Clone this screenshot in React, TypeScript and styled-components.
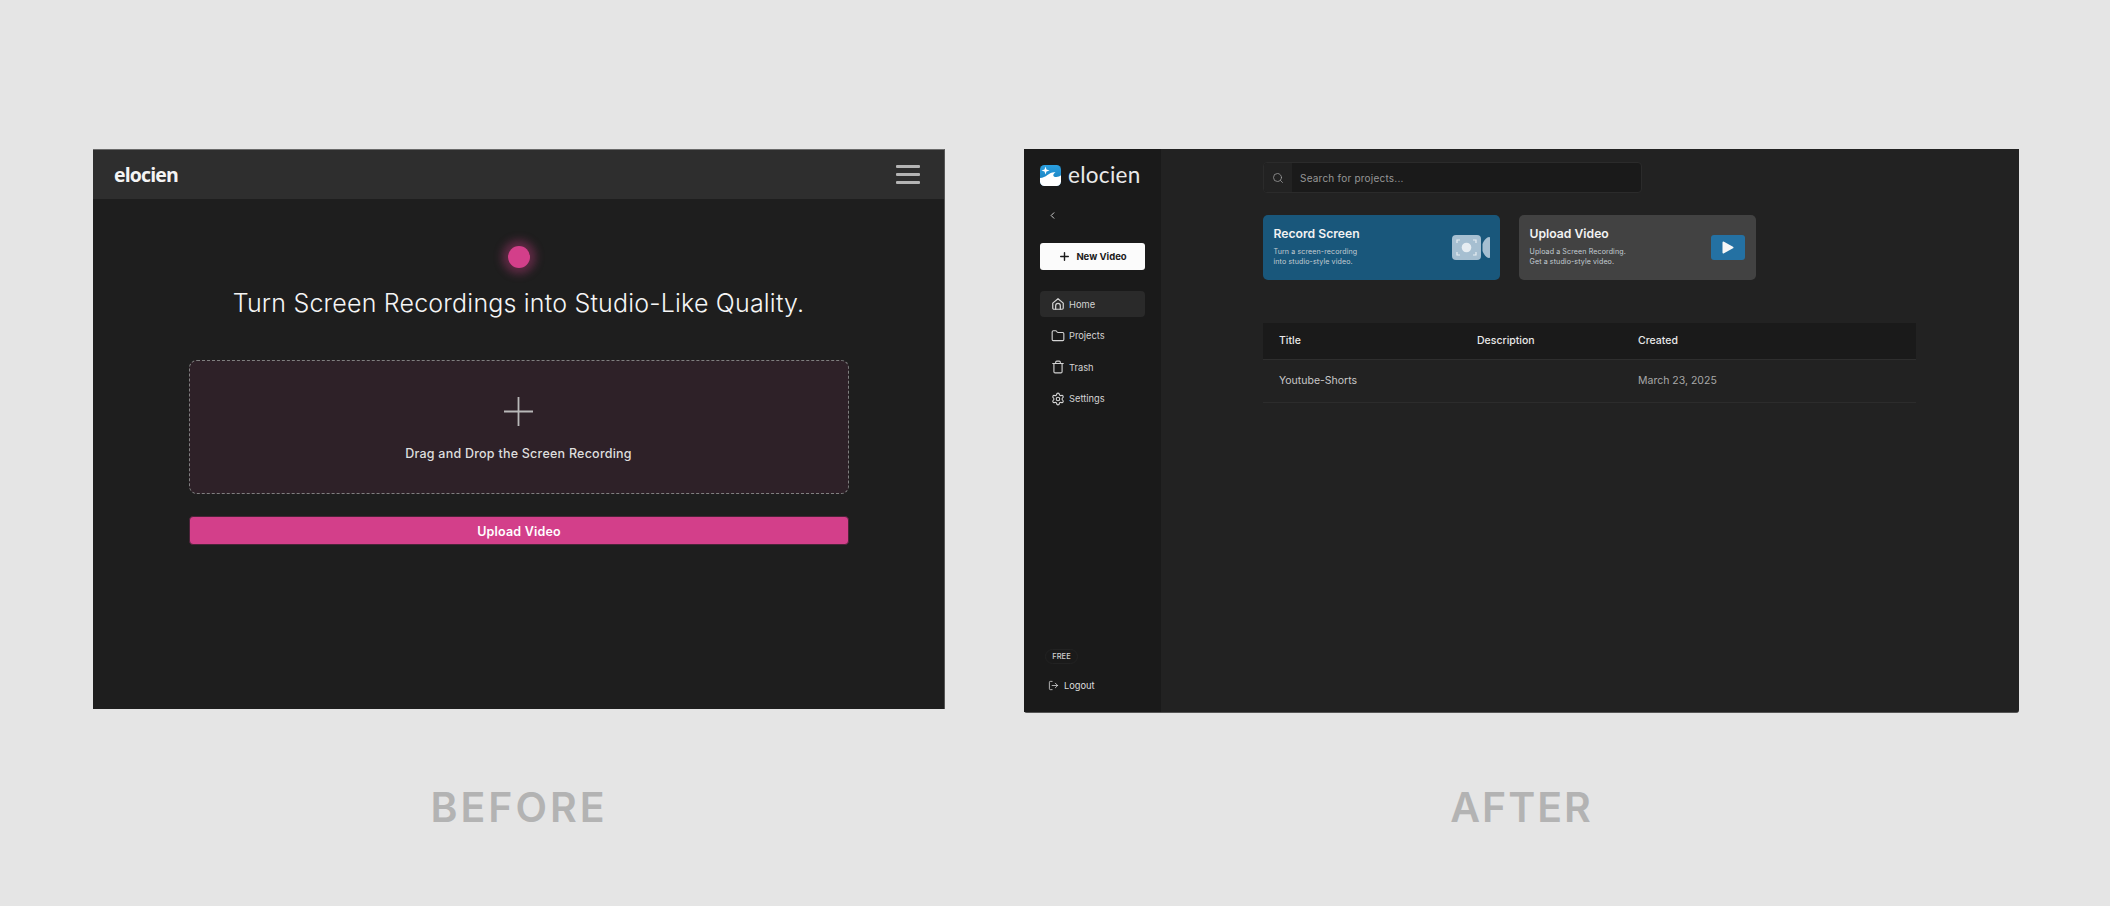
import styled, { createGlobalStyle } from "styled-components";
import { ChevronLeft, Folder, LogOut, Plus, Search, Settings, Trash } from "lucide-react";

const GlobalStyle = createGlobalStyle`
  * { box-sizing: border-box; }
  html, body { margin: 0; padding: 0; background: #e5e5e5; }
  body { font-family: "Inter", "Liberation Sans", sans-serif; overflow: hidden; }
`

const Stage = styled.div`
  display: flex;
  gap: 79px;
  align-items: flex-start;
  width: 2110px;
  height: 906px;
  padding: 149px 0 0 93px;
  background: #e5e5e5;
`

const Column = styled.section<{ $width: number }>`
  display: flex;
  flex-direction: column;
  justify-content: space-between;
  align-items: center;
  width: ${p => p.$width}px;
  height: 683px;
`

const Caption = styled.div<{ $tracking: number }>`
  font-family: "Inter", sans-serif;
  font-size: 41px;
  font-weight: 600;
  line-height: 50px;
  letter-spacing: ${p => p.$tracking}px;
  color: #b3b3b3;
`

/* before */
const BeforePanel = styled.div`
  width: 100%;
  height: 560px;
  background: #1e1e1e;
  border-top: 1px solid #6a6a6a;
  border-right: 1px solid #555;
`

const TopBar = styled.header`
  display: flex;
  align-items: center;
  justify-content: space-between;
  height: 49px;
  padding: 0 24px 0 21px;
  background: #2e2e2e;
`

const Brand = styled.div`
  font-family: "Open Sans", sans-serif;
  font-size: 19.5px;
  font-weight: 700;
  letter-spacing: -0.85px;
  color: #f4f4f4;
`

const Burger = styled.div`
  display: flex;
  flex-direction: column;
  gap: 5px;
  width: 24px;
`

const BurgerLine = styled.span`
  height: 3px;
  border-radius: 1px;
  background: #b4b4b4;
`

const BeforeBody = styled.main`
  display: flex;
  flex-direction: column;
  align-items: center;
  padding-top: 47px;
`

const RecordDot = styled.div`
  width: 22px;
  height: 22px;
  border-radius: 50%;
  background: #d33f8a;
  box-shadow: 0 0 9px 6px rgba(211, 63, 138, 0.35);
`

const Headline = styled.h1`
  margin: 20px 0 0;
  font-family: "Inter", sans-serif;
  font-size: 25px;
  font-weight: 300;
  line-height: 30px;
  letter-spacing: 0.19px;
  color: #f5f5f5;
`

const DropZone = styled.div`
  display: flex;
  flex-direction: column;
  align-items: center;
  gap: 20px;
  width: 660px;
  height: 134px;
  margin-top: 42px;
  padding-top: 36px;
  background: #2e2128;
  border: 1px dashed #7f7f7f;
  border-radius: 8px;
`

const DropLabel = styled.div`
  font-size: 12.5px;
  font-weight: 500;
  line-height: 16px;
  letter-spacing: 0.24px;
  color: #dedede;
`

const UploadButton = styled.button`
  width: 660px;
  height: 29px;
  margin-top: 22px;
  padding: 0 0 0 1px;
  font-family: "Inter", sans-serif;
  font-size: 12.5px;
  font-weight: 600;
  letter-spacing: 0.2px;
  line-height: 29px;
  color: #fff;
  background: #d33f8a;
  border: 1px solid #4c2339;
  border-radius: 4px;
`

/* after */
const AfterPanel = styled.div`
  display: flex;
  width: 100%;
  height: 564px;
  background: #222;
  border-radius: 0 0 3px 3px;
  border-bottom: 1px solid #555;
`

const Sidebar = styled.aside`
  display: flex;
  flex-direction: column;
  width: 137px;
  padding: 16px 16px 0;
  background: #1a1a1a;
`

const LogoRow = styled.div`
  display: flex;
  align-items: center;
  gap: 7px;
  height: 21px;
`

const LogoText = styled.span`
  padding-bottom: 2px;
  font-family: "Lato", sans-serif;
  font-size: 22.5px;
  font-weight: 400;
  letter-spacing: 0.3px;
  color: #e9e9e9;
`

const Collapse = styled.div`
  display: flex;
  align-items: center;
  height: 12px;
  margin-top: 23px;
  padding-left: 7px;
  color: #ddd;
`

const NewVideoButton = styled.button`
  display: flex;
  align-items: center;
  justify-content: center;
  gap: 5px;
  width: 105px;
  height: 27px;
  margin-top: 22px;
  padding: 0;
  font-family: "Inter", sans-serif;
  font-size: 9.5px;
  font-weight: 700;
  color: #1a1a1a;
  background: #fbfbfb;
  border: none;
  border-radius: 3px;
`

const Nav = styled.nav`
  display: flex;
  flex-direction: column;
  gap: 5.5px;
  margin-top: 21px;
`

const NavItem = styled.div<{ $active?: boolean }>`
  display: flex;
  align-items: center;
  gap: 4.5px;
  height: 26px;
  padding-left: 10.5px;
  font-size: 9.3px;
  color: #d4d4d4;
  background: ${p => (p.$active ? "#2a2a2a" : "transparent")};
  border-radius: 4px;
`

const SideFooter = styled.div`
  display: flex;
  flex-direction: column;
  align-items: flex-start;
  gap: 16px;
  margin-top: auto;
  padding: 0 0 21px 5px;
`

const PlanBadge = styled.div`
  display: flex;
  align-items: center;
  justify-content: center;
  width: 33px;
  height: 15px;
  font-size: 7.5px;
  font-weight: 500;
  color: #cfcfcf;
  border: 1px solid #222;
  border-radius: 8px;
`

const LogoutRow = styled.div`
  display: flex;
  align-items: center;
  gap: 5px;
  padding-left: 3px;
  font-size: 9.3px;
  color: #dcdcdc;
`

const Main = styled.main`
  flex: 1;
  padding: 13px 0 0 102px;
`

const SearchBar = styled.div`
  display: flex;
  width: 379px;
  height: 31px;
  background: #1a1a1a;
  border: 1px solid #2b2b2b;
  border-radius: 4px;
  overflow: hidden;
`

const SearchIconBox = styled.div`
  display: flex;
  align-items: center;
  justify-content: center;
  width: 28px;
  color: #9a9a9a;
  background: #222;
`

const SearchText = styled.div`
  display: flex;
  align-items: center;
  padding-left: 8px;
  font-size: 10px;
  letter-spacing: 0.22px;
  color: #969696;
`

const Cards = styled.div`
  display: flex;
  gap: 19px;
  margin-top: 22px;
`

const Card = styled.div<{ $bg: string }>`
  display: flex;
  justify-content: space-between;
  align-items: center;
  width: 237px;
  height: 65px;
  padding: 0 11px 0 10.5px;
  background: ${p => p.$bg};
  border-radius: 5px;
`

const CardText = styled.div`
  align-self: flex-start;
  padding-top: 10.5px;
`

const CardTitle = styled.div`
  font-size: 12.2px;
  font-weight: 600;
  line-height: 16px;
  color: #f2f2f2;
`

const CardDesc = styled.div`
  margin-top: 5.5px;
  font-size: 7.1px;
  line-height: 9.5px;
  letter-spacing: 0.1px;
  color: #c4cdd3;
`

const CameraWrap = styled.div`
  display: flex;
  margin-right: -1px;
`

const PlayBox = styled.div`
  display: flex;
  align-items: center;
  justify-content: center;
  width: 34px;
  height: 25px;
  background: #2471a3;
  border-radius: 3px;
`

const ProjectTable = styled.table`
  width: 653px;
  margin-top: 43px;
  table-layout: fixed;
  border-collapse: collapse;
`

const HeadCell = styled.th<{ $width?: number }>`
  width: ${p => (p.$width ? `${p.$width}px` : "auto")};
  height: 36px;
  padding: 0;
  font-size: 10.5px;
  font-weight: 500;
  text-align: left;
  color: #e8e8e8;
  background: #1a1a1a;
  border-bottom: 1px solid #2e2e2e;
  &:first-child { padding-left: 16px; }
`

const BodyCell = styled.td<{ $muted?: boolean }>`
  height: 43px;
  padding: 0;
  font-size: 10.5px;
  color: ${p => (p.$muted ? "#a8a8a8" : "#c8c8c8")};
  border-bottom: 1px solid #2c2c2c;
  &:first-child { padding-left: 16px; }
`

const LogoMark = () => (
  <svg width="21" height="21" viewBox="0 0 21 21">
    <defs>
      <linearGradient id="logoSky" x1="0" y1="0" x2="0" y2="1">
        <stop offset="0" stopColor="#2a9fe0" />
        <stop offset="1" stopColor="#1578b4" />
      </linearGradient>
      <clipPath id="logoClip">
        <rect width="21" height="21" rx="4.500" />
      </clipPath>
    </defs>
    <g clipPath="url(#logoClip)">
      <rect width="21" height="21" fill="url(#logoSky)" />
      <path d="M0 13c3-.2 5.200-1.300 7.400-3 2.600-2 5.400-3.200 8.100-2.600-1.400.8-2.200 1.700-2.200 2.800 0 1.300 1.300 1.900 3 1.800 1.800-.1 3.400-.8 4.700-1.700V21H0z" fill="#fff" />
      <path d="M5.500 1.500l1 3 3 1-3 1-1 3-1-3-3-1 3-1z" fill="#fff" />
    </g>
  </svg>
)

const HomeIcon = () => (
  <svg width="14" height="14" viewBox="0 0 24 24" fill="none" stroke="currentColor" strokeWidth="2.100" strokeLinejoin="round" strokeLinecap="round">
    <path d="M3 10.500 12 3l9 7.500V19a2 2 0 0 1-2 2H5a2 2 0 0 1-2-2z" />
    <path d="M8 21v-6a4 4 0 0 1 8 0v6" />
  </svg>
)

const CameraIcon = () => (
  <svg width="38" height="25" viewBox="0 0 38 25">
    <rect width="29" height="25" rx="4" fill="#a6bfd1" />
    <path d="M30.500 9C32 5 35 2 37 2c.6 0 1 .4 1 1v19c0 .6-.4 1-1 1-2 0-5-3-6.500-7z" fill="#a6bfd1" />
    <circle cx="14.500" cy="12.500" r="4.800" fill="#e6edf2" />
    <path d="M5 8V5h3M21 5h3v3M24 17v3h-3M8 20H5v-3" fill="none" stroke="#e6edf2" strokeWidth="1.200" />
  </svg>
)

const PlayIcon = () => (
  <svg width="12" height="13" viewBox="0 0 12 13">
    <path d="M1.500 1.500 10.500 6.500 1.500 11.500z" fill="#f7f7f7" stroke="#f7f7f7" strokeWidth="2" strokeLinejoin="round" />
  </svg>
)

const ThinPlus = () => (
  <svg width="29" height="29" viewBox="0 0 29 29" stroke="#b8b8b8" strokeWidth="1.800">
    <path d="M14.500 0v29M0 14.500h29" />
  </svg>
)

const navItems = [
  { label: "Home", icon: <HomeIcon />, active: true },
  { label: "Projects", icon: <Folder size={14} strokeWidth={1.9} /> },
  { label: "Trash", icon: <Trash size={14} strokeWidth={1.9} /> },
  { label: "Settings", icon: <Settings size={14} strokeWidth={1.9} /> },
]

const App = () => {
  return (
    <>
      <GlobalStyle />
      <Stage>
        <Column $width={852}>
          <BeforePanel>
            <TopBar>
              <Brand>elocien</Brand>
              <Burger>
                <BurgerLine />
                <BurgerLine />
                <BurgerLine />
              </Burger>
            </TopBar>
            <BeforeBody>
              <RecordDot />
              <Headline>Turn Screen Recordings into Studio-Like Quality.</Headline>
              <DropZone>
                <ThinPlus />
                <DropLabel>Drag and Drop the Screen Recording</DropLabel>
              </DropZone>
              <UploadButton>Upload Video</UploadButton>
            </BeforeBody>
          </BeforePanel>
          <Caption $tracking={3}>BEFORE</Caption>
        </Column>

        <Column $width={995}>
          <AfterPanel>
            <Sidebar>
              <LogoRow>
                <LogoMark />
                <LogoText>elocien</LogoText>
              </LogoRow>
              <Collapse>
                <ChevronLeft size={11} strokeWidth={2} />
              </Collapse>
              <NewVideoButton>
                <Plus size={13} strokeWidth={2.6} />
                New Video
              </NewVideoButton>
              <Nav>
                {navItems.map(item => (
                  <NavItem key={item.label} $active={item.active}>
                    {item.icon}
                    {item.label}
                  </NavItem>
                ))}
              </Nav>
              <SideFooter>
                <PlanBadge>FREE</PlanBadge>
                <LogoutRow>
                  <LogOut size={11} strokeWidth={1.7} />
                  Logout
                </LogoutRow>
              </SideFooter>
            </Sidebar>
            <Main>
              <SearchBar>
                <SearchIconBox>
                  <Search size={12} strokeWidth={1.6} />
                </SearchIconBox>
                <SearchText>Search for projects...</SearchText>
              </SearchBar>
              <Cards>
                <Card $bg="#19577b">
                  <CardText>
                    <CardTitle>Record Screen</CardTitle>
                    <CardDesc>
                      Turn a screen-recording
                      <br />
                      into studio-style video.
                    </CardDesc>
                  </CardText>
                  <CameraWrap>
                    <CameraIcon />
                  </CameraWrap>
                </Card>
                <Card $bg="#424242">
                  <CardText>
                    <CardTitle>Upload Video</CardTitle>
                    <CardDesc>
                      Upload a Screen Recording.
                      <br />
                      Get a studio-style video.
                    </CardDesc>
                  </CardText>
                  <PlayBox>
                    <PlayIcon />
                  </PlayBox>
                </Card>
              </Cards>
              <ProjectTable>
                <thead>
                  <tr>
                    <HeadCell $width={214}>Title</HeadCell>
                    <HeadCell $width={161}>Description</HeadCell>
                    <HeadCell>Created</HeadCell>
                  </tr>
                </thead>
                <tbody>
                  <tr>
                    <BodyCell>Youtube-Shorts</BodyCell>
                    <BodyCell />
                    <BodyCell $muted>March 23, 2025</BodyCell>
                  </tr>
                </tbody>
              </ProjectTable>
            </Main>
          </AfterPanel>
          <Caption $tracking={2}>AFTER</Caption>
        </Column>
      </Stage>
    </>
  )
}

export default App
